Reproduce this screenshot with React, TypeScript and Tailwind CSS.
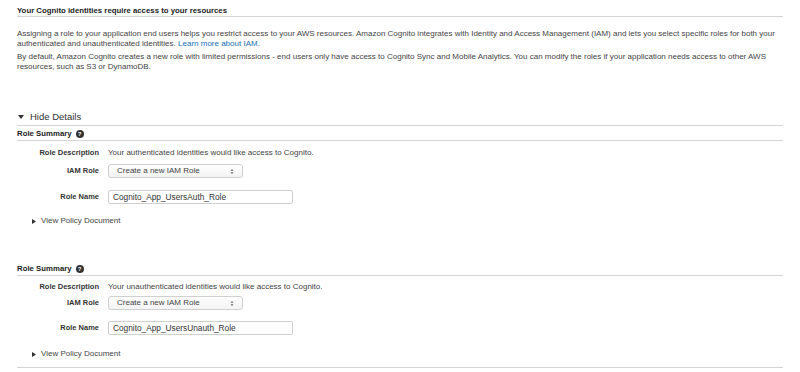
import React from "react";

const HelpIcon = () => (
  <span className="ml-[4px] inline-flex h-[8px] w-[8px] items-center justify-center rounded-full bg-[#333] text-[6px] font-bold leading-none text-white">
    ?
  </span>
);

const Arrows = () => (
  <svg width="4" height="7" viewBox="0 0 4 7" className="text-[#666]">
    <path d="M0.5 2.7 L2 1 L3.5 2.7 Z" fill="currentColor" />
    <path d="M0.5 4.3 L2 6 L3.5 4.3 Z" fill="currentColor" />
  </svg>
);

type RoleProps = {
  top: string;
  description: string;
  roleName: string;
  gaps: { desc: string; select: string; input: string; policy: string };
};

const RoleSummary = ({ top, description, roleName, gaps }: RoleProps) => (
  <div className={top}>
    <div className="flex items-center border-b border-[#d5d5d5] pb-[2px] text-[7.8px] font-bold leading-[8px] text-[#222]">
      Role Summary
      <HelpIcon />
    </div>
    <div className={`flex items-center leading-[8px] ${gaps.desc}`}>
      <div className="w-[82px] text-right text-[7.5px] font-bold text-[#333]">Role Description</div>
      <div className="ml-[9px] text-[#444]">{description}</div>
    </div>
    <div className={`flex items-center ${gaps.select}`}>
      <div className="w-[82px] text-right text-[7.5px] font-bold text-[#333]">IAM Role</div>
      <div className="ml-[9px] flex h-[14px] w-[135px] items-center justify-between rounded-[3px] border border-[#d0d0d0] bg-gradient-to-b from-white to-[#f3f3f3] pl-[8px] pr-[8px] text-[#444]">
        <span>Create a new IAM Role</span>
        <Arrows />
      </div>
    </div>
    <div className={`flex items-center ${gaps.input}`}>
      <div className="w-[82px] text-right text-[7.5px] font-bold text-[#333]">Role Name</div>
      <div className="ml-[9px] flex h-[14px] w-[185px] items-center rounded-[2px] border border-[#cfcfcf] bg-white pl-[4px] text-[8.3px] text-[#333]">
        {roleName}
      </div>
    </div>
    <div className={`flex items-center pl-[15px] leading-[8px] text-[#444] ${gaps.policy}`}>
      <svg width="4" height="5" viewBox="0 0 4 5" className="mr-[5px]">
        <path d="M0 0 L4 2.5 L0 5 Z" fill="#333" />
      </svg>
      View Policy Document
    </div>
  </div>
);

export default function App() {
  return (
    <div className="h-[372px] w-[800px] overflow-hidden bg-white pl-[17px] pr-[17px] font-['Liberation_Sans',Arial,sans-serif] text-[8px] text-[#444]">
      <div className="border-b border-[#d5d5d5] pt-[7px] pb-[1px] text-[7.8px] font-bold leading-[8px] text-[#222]">
        Your Cognito identities require access to your resources
      </div>
      <p className="mt-[12px] whitespace-nowrap leading-[10px]">
        Assigning a role to your application end users helps you restrict access to your AWS resources. Amazon Cognito integrates with Identity and Access Management (IAM) and lets you select specific roles for both your
        <br />
        authenticated and unauthenticated identities.{" "}
        <span className="text-[#1a6fb5]">Learn more about IAM.</span>
      </p>
      <p className="mt-[3px] whitespace-nowrap leading-[10px]">
        By default, Amazon Cognito creates a new role with limited permissions - end users only have access to Cognito Sync and Mobile Analytics. You can modify the roles if your application needs access to other AWS
        <br />
        resources, such as S3 or DynamoDB.
      </p>

      <div className="mt-[40px] flex items-center border-b border-[#d5d5d5] pb-[3px] text-[9.5px] leading-[10px] text-[#333]">
        <svg width="6" height="4" viewBox="0 0 6 4" className="ml-[1px] mr-[6px]">
          <path d="M0 0 L6 0 L3 4 Z" fill="#333" />
        </svg>
        Hide Details
      </div>

      <RoleSummary
        top="mt-[4px]"
        description="Your authenticated identities would like access to Cognito."
        roleName="Cognito_App_UsersAuth_Role"
        gaps={{ desc: "mt-[8px]", select: "mt-[7px]", input: "mt-[12px]", policy: "mt-[13px]" }}
      />
      <RoleSummary
        top="mt-[40px]"
        description="Your unauthenticated identities would like access to Cognito."
        roleName="Cognito_App_UsersUnauth_Role"
        gaps={{ desc: "mt-[7px]", select: "mt-[5px]", input: "mt-[11px]", policy: "mt-[15px]" }}
      />
      <div className="mt-[9px] border-b border-[#d5d5d5]" />
    </div>
  );
}
